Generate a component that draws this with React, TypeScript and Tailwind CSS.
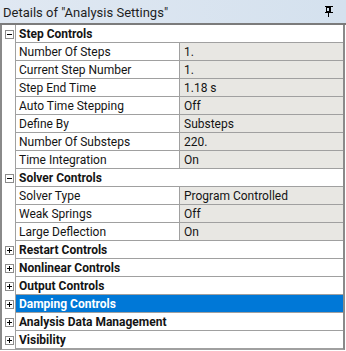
import React from 'react';

type Row =
  | { kind: 'group'; label: string; open: boolean; selected?: boolean }
  | { kind: 'prop'; label: string; value: string };

const rows: Row[] = [
  { kind: 'group', label: 'Step Controls', open: true },
  { kind: 'prop', label: 'Number Of Steps', value: '1.' },
  { kind: 'prop', label: 'Current Step Number', value: '1.' },
  { kind: 'prop', label: 'Step End Time', value: '1.18 s' },
  { kind: 'prop', label: 'Auto Time Stepping', value: 'Off' },
  { kind: 'prop', label: 'Define By', value: 'Substeps' },
  { kind: 'prop', label: 'Number Of Substeps', value: '220.' },
  { kind: 'prop', label: 'Time Integration', value: 'On' },
  { kind: 'group', label: 'Solver Controls', open: true },
  { kind: 'prop', label: 'Solver Type', value: 'Program Controlled' },
  { kind: 'prop', label: 'Weak Springs', value: 'Off' },
  { kind: 'prop', label: 'Large Deflection', value: 'On' },
  { kind: 'group', label: 'Restart Controls', open: false },
  { kind: 'group', label: 'Nonlinear Controls', open: false },
  { kind: 'group', label: 'Output Controls', open: false },
  { kind: 'group', label: 'Damping Controls', open: false, selected: true },
  { kind: 'group', label: 'Analysis Data Management', open: false },
  { kind: 'group', label: 'Visibility', open: false },
];

function ToggleBox({ open }: { open: boolean }) {
  return (
    <svg width="9" height="9" viewBox="0 0 9 9" className="block">
      <rect x="0.5" y="0.5" width="8" height="8" fill="#fff" stroke="#8c8c8c" />
      <line x1="2" y1="4.5" x2="7" y2="4.5" stroke="#000" />
      {!open && <line x1="4.5" y1="2" x2="4.5" y2="7" stroke="#000" />}
    </svg>
  );
}

function PinIcon() {
  return (
    <svg width="8" height="11" viewBox="0 0 8 11" className="block">
      <rect x="0" y="0" width="8" height="1" fill="#000" />
      <rect x="1.5" y="1.5" width="4" height="4" fill="none" stroke="#000" />
      <rect x="4" y="1" width="2" height="5" fill="#000" />
      <rect x="0" y="6" width="8" height="1" fill="#000" />
      <rect x="3" y="7" width="1" height="4" fill="#000" />
    </svg>
  );
}

export default function App() {
  return (
    <div
      className="w-[346px] h-[351px] bg-white text-[12px] text-[#141414] overflow-hidden"
      style={{ fontFamily: 'Roboto, "Noto Sans", sans-serif' }}
    >
      {/* title bar */}
      <div className="h-[23px] flex items-center justify-between pl-[3px] pr-[13px] bg-gradient-to-r from-[#e0e8f2] to-[#d4e1ee]">
        <span className="text-[13px] text-[#1e1e1e] leading-none pt-[1px]">Details of "Analysis Settings"</span>
        <PinIcon />
      </div>
      <div className="h-[2px] bg-[#7b7b7b]" />

      {/* property grid */}
      <div className="w-[345px] border-x-2 border-[#8a8a8a] border-b border-b-[#a0a0a0]">
        {rows.map((row, i) => (
          <div key={i} className="flex h-[18px]">
            <div className="w-[14px] flex items-center justify-center border-r border-[#a0a0a0] pl-[1px]">
              {row.kind === 'group' && <ToggleBox open={row.open} />}
            </div>
            {row.kind === 'group' ? (
              <div
                className={
                  'flex-1 flex items-center pl-[3px] pt-[1px] font-bold border-b border-[#a0a0a0] ' +
                  (row.selected ? 'bg-[#0078d7] text-white' : 'bg-white')
                }
              >
                {row.label}
              </div>
            ) : (
              <>
                <div className="w-[164px] flex items-center pl-[3px] pt-[1px] border-b border-r border-[#a0a0a0] whitespace-nowrap">
                  {row.label}
                </div>
                <div className="flex-1 flex items-center pl-[4px] pt-[1px] bg-[#e8e7e3] border-b border-[#a0a0a0] whitespace-nowrap">
                  {row.value}
                </div>
              </>
            )}
          </div>
        ))}
      </div>
    </div>
  );
}
